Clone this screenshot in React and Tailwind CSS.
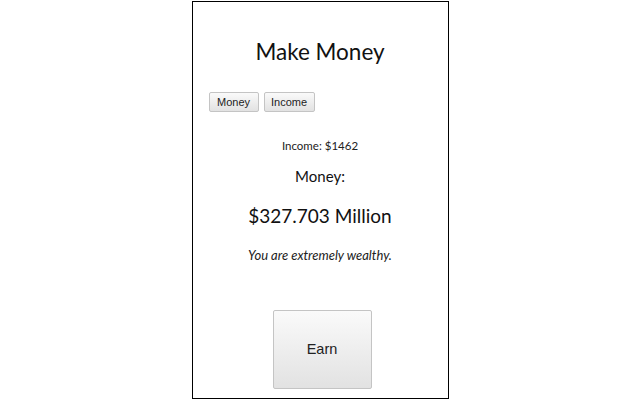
import React, { useState } from 'react';

const btn =
  'border border-[#c4c4c4] rounded-[2px] bg-gradient-to-b from-[#fafafa] to-[#e2e2e2] text-[#222] font-["Liberation_Sans",Arial,sans-serif]';

const App = () => {
  const [money] = useState('$327.703 Million');
  const [income] = useState(1462);

  return (
    <div className="w-[640px] h-[400px] bg-white flex justify-center pt-px">
      <div className="w-[257px] h-[398px] border border-black flex flex-col items-center font-['Lato','Noto_Sans',sans-serif] text-[#111]">
        <h1 className="mt-[33px] text-[22.5px] leading-[34px]">Make Money</h1>

        <div className="self-start flex gap-[5px] ml-[16px] mt-[23px]">
          <button className={`${btn} w-[50px] h-[20px] text-[11px]`}>Money</button>
          <button className={`${btn} w-[51px] h-[20px] text-[11px]`}>Income</button>
        </div>

        <p className="mt-[25px] text-[11.5px] leading-[18px] text-[#222]">Income: ${income}</p>
        <p className="mt-[9px] text-[15px] leading-[24px]">Money:</p>
        <p className="mt-[13px] text-[19px] leading-[30px]">{money}</p>
        <p className="mt-[15px] text-[13px] leading-[18px] italic text-[#222]">You are extremely wealthy.</p>

        <button className={`${btn} mt-[46px] ml-[4px] w-[99px] h-[79px] text-[14.5px]`}>Earn</button>
      </div>
    </div>
  );
};

export default App;
